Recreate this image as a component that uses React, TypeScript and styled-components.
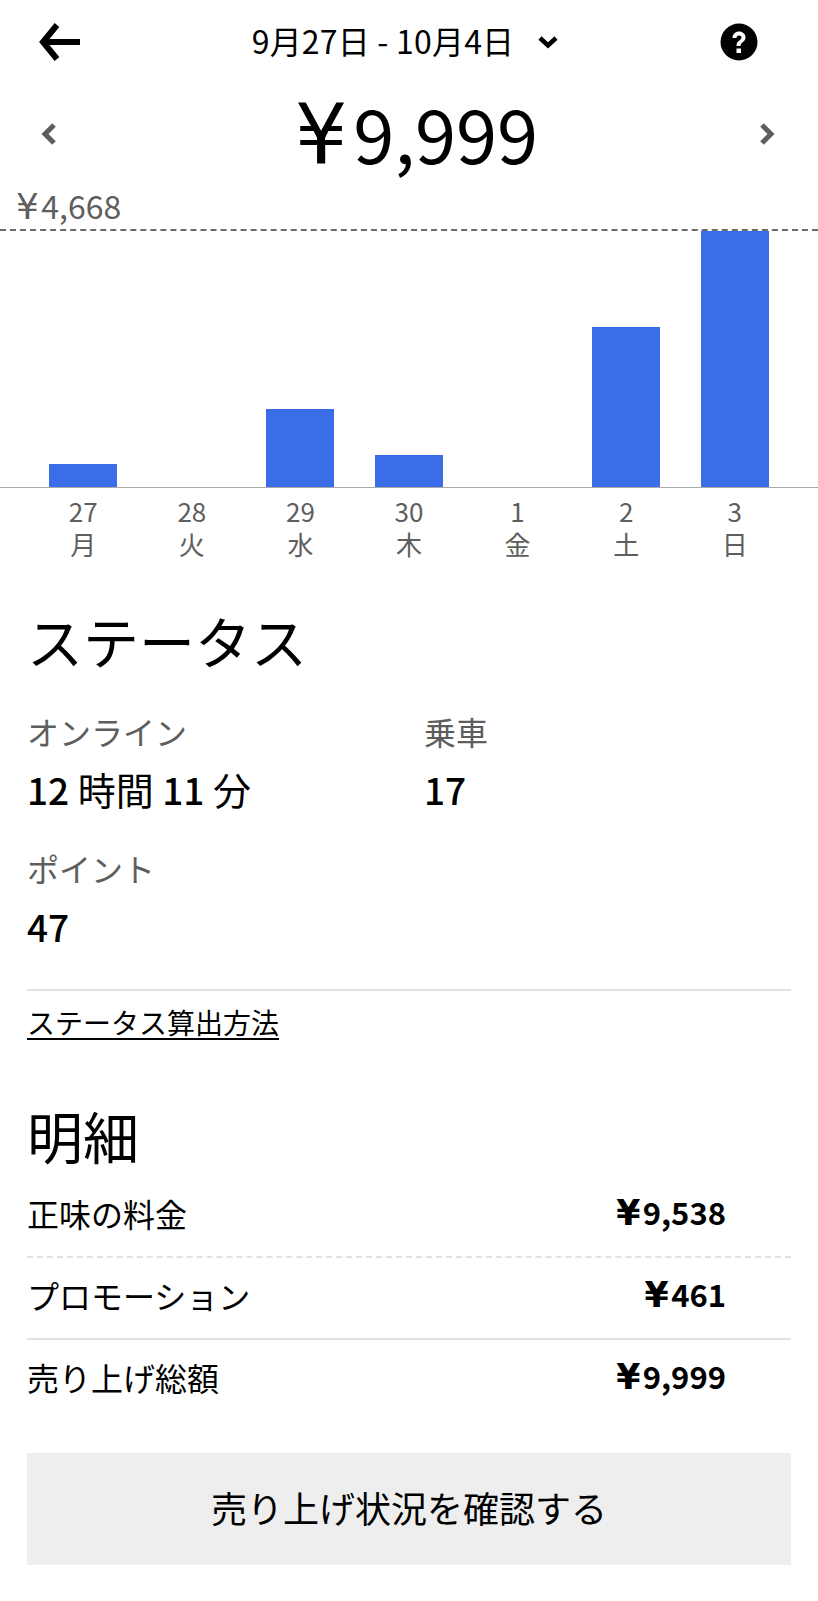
import React, { type FC } from 'react'
import styled, { createGlobalStyle } from 'styled-components'

const GlobalStyle = createGlobalStyle`
  html, body {
    margin: 0;
    padding: 0;
    background: #fff;
    color: #000;
    font-family: 'Noto Sans CJK JP', 'Noto Sans', sans-serif;
  }
`

const Page = styled.div`
  width: 818px;
  height: 1601px;
  overflow: hidden;
`

const TopBar = styled.div`
  display: flex;
  align-items: center;
  justify-content: space-between;
  height: 84px;
  padding: 0 60px 0 39px;
`

const DateButton = styled.div`
  display: flex;
  align-items: center;
  gap: 24px;
  margin-left: 10px;
  font-size: 32px;
  line-height: 40px;
  letter-spacing: 0.2px;
`

const DateText = styled.span`
  position: relative;
  top: -2px;
`

const AmountRow = styled.div`
  display: flex;
  align-items: center;
  justify-content: space-between;
  height: 99px;
  padding: 0 43px 2px 41px;
`

const Amount = styled.div`
  margin-left: 17px;
  font-size: 74px;
  line-height: 100px;
`

// the reference's yen sign is wide and thin, with a gap before the digits
const Yen = styled.span`
  font-family: 'DejaVu Sans', sans-serif;
  font-size: 1.12em;
  letter-spacing: 0.07em;
`

const MaxLabel = styled.div`
  padding-left: 16px;
  font-size: 32px;
  line-height: 40px;
  height: 44px;
  color: #5e5e5e;
`

const Plot = styled.div`
  display: grid;
  grid-template-columns: repeat(7, 1fr);
  align-items: end;
  height: 256px;
  padding: 0 29px;
  border-top: 2px dashed #6b6b6b;
  border-bottom: 1px solid #aaa;
`

const Bar = styled.div`
  width: 68px;
  justify-self: center;
  background: #3b6de8;
`

const Axis = styled.div`
  display: grid;
  grid-template-columns: repeat(7, 1fr);
  padding: 6px 29px 0;
`

const Tick = styled.div`
  text-align: center;
  font-size: 26px;
  line-height: 33px;
  color: #5e5e5e;
`

const Section = styled.div`
  padding: 0 27px;
`

const Heading = styled.h2<{ $top: number }>`
  margin: ${({ $top }) => $top}px 0 0;
  font-size: 56px;
  font-weight: 400;
  line-height: 76px;
`

const Stats = styled.div`
  display: grid;
  grid-template-columns: 397px 1fr;
  row-gap: 31px;
  margin: 31px 0 37px;
`

const StatLabel = styled.div`
  font-size: 32px;
  line-height: 44px;
  color: #5e5e5e;
`

const StatValue = styled.div`
  margin-top: 10px;
  font-size: 38px;
  line-height: 52px;
`

const Num = styled.span`
  font-size: 37px;
  font-weight: 500;
`

const Rule = styled.div<{ $dashed?: boolean }>`
  border-top: 2px ${({ $dashed }) => ($dashed ? 'dashed' : 'solid')} #e2e2e2;
`

const HowLink = styled.a`
  display: inline-block;
  margin-top: 11px;
  font-size: 28px;
  line-height: 40px;
  text-decoration: underline;
  text-underline-offset: 4px;
  color: #000;
`

const Breakdown = styled.div`
  margin-top: 3px;
`

const Row = styled.div`
  display: flex;
  align-items: center;
  justify-content: space-between;
  box-sizing: border-box;
  height: 80px;
  padding: 0 65px 7px 0;
  font-size: 32px;
`

const RowValue = styled.span`
  font-size: 31px;
  line-height: 44px;
  font-weight: 700;
`

const ActionButton = styled.div`
  display: flex;
  align-items: center;
  justify-content: center;
  box-sizing: border-box;
  height: 112px;
  margin-top: 33px;
  padding-bottom: 4px;
  background: #eee;
  font-size: 36px;
`

const BackIcon: FC = () => (
  <svg width='41' height='38' viewBox='0 0 41 38' fill='none' stroke='#000' strokeWidth='6'>
    <path d='M4 19H41' />
    <path d='M18 2 4 19 18 36' />
  </svg>
)

const CaretIcon: FC = () => (
  <svg width='20' height='14' viewBox='0 0 20 14' fill='none' stroke='#000' strokeWidth='4.5'>
    <path d='M2 3 10 10.5 18 3' />
  </svg>
)

const HelpIcon: FC = () => (
  <svg width='38' height='38' viewBox='0 0 38 38'>
    <circle cx='19' cy='19' r='18.5' fill='#000' />
    <path d='M12.5 15c0-4 3-6.500 6.500-6.500s6.500 2.500 6.500 6c0 4.500-5 4.500-5 8.500h-4c0-6 5-5.500 5-8.500 0-1.200-1-2-2.500-2s-2.500 1-2.500 2.500z' fill='#fff' />
    <rect x='16.500' y='25.500' width='4.500' height='4.500' fill='#fff' />
  </svg>
)

const NavIcon: FC<{ $flip?: boolean }> = ({ $flip }) => (
  <svg width='16' height='22' viewBox='0 0 16 22' fill='none' stroke='#5e5e5e' strokeWidth='5'>
    <path d={$flip ? 'M3 2 12 11 3 20' : 'M13 2 4 11 13 20'} />
  </svg>
)

const YEN = '\u00A5'

const days = [
  { day: '27', week: '月', height: 23 },
  { day: '28', week: '火', height: 0 },
  { day: '29', week: '水', height: 78 },
  { day: '30', week: '木', height: 32 },
  { day: '1', week: '金', height: 0 },
  { day: '2', week: '土', height: 160 },
  { day: '3', week: '日', height: 256 },
]

const rows = [
  { label: '正味の料金', value: '9,538' },
  { label: 'プロモーション', value: '461' },
  { label: '売り上げ総額', value: '9,999' },
]

const App: FC = () => (
  <Page>
    <GlobalStyle />
    <TopBar>
      <BackIcon />
      <DateButton>
        <DateText>9月27日 - 10月4日</DateText>
        <CaretIcon />
      </DateButton>
      <HelpIcon />
    </TopBar>
    <AmountRow>
      <NavIcon />
      <Amount>
        <Yen>{YEN}</Yen>9,999
      </Amount>
      <NavIcon $flip />
    </AmountRow>
    <div>
      <MaxLabel>
        <Yen>{YEN}</Yen>4,668
      </MaxLabel>
      <Plot>
        {days.map((d) => (
          <Bar key={d.day} style={{ height: d.height }} />
        ))}
      </Plot>
      <Axis>
        {days.map((d) => (
          <Tick key={d.day}>
            {d.day}
            <br />
            {d.week}
          </Tick>
        ))}
      </Axis>
    </div>
    <Section>
      <Heading $top={42}>ステータス</Heading>
      <Stats>
        <div>
          <StatLabel>オンライン</StatLabel>
          <StatValue>
            <Num>12</Num> 時間 <Num>11</Num> 分
          </StatValue>
        </div>
        <div>
          <StatLabel>乗車</StatLabel>
          <StatValue>
            <Num>17</Num>
          </StatValue>
        </div>
        <div>
          <StatLabel>ポイント</StatLabel>
          <StatValue>
            <Num>47</Num>
          </StatValue>
        </div>
      </Stats>
      <Rule />
      <HowLink>ステータス算出方法</HowLink>
      <Heading $top={55}>明細</Heading>
      <Breakdown>
        {rows.map((r, i) => (
          <React.Fragment key={r.label}>
            {i === 1 && <Rule $dashed />}
            {i === 2 && <Rule />}
            <Row>
              <span>{r.label}</span>
              <RowValue>
                <Yen>{YEN}</Yen>
                {r.value}
              </RowValue>
            </Row>
          </React.Fragment>
        ))}
      </Breakdown>
      <ActionButton>売り上げ状況を確認する</ActionButton>
    </Section>
  </Page>
)

export default App
